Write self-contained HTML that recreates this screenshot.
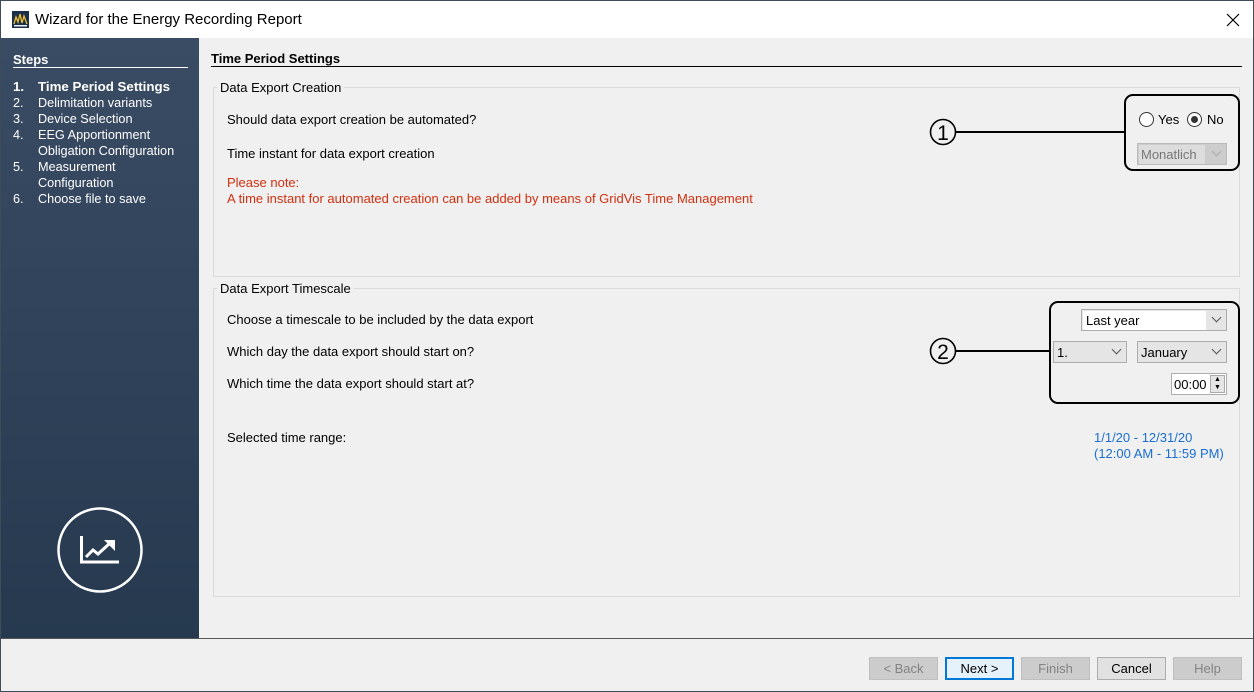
<!DOCTYPE html>
<html><head><meta charset="utf-8"><style>
*{box-sizing:border-box;margin:0;padding:0}
body{width:1254px;height:692px;position:relative;overflow:hidden;font-family:"Liberation Sans",sans-serif;font-size:13px;color:#000;background:#3e4c5a}
.a{position:absolute;white-space:nowrap}
#win{position:absolute;left:1px;top:1px;width:1252px;height:690px;background:#f0f0f0}
#title{position:absolute;left:0;top:0;width:1252px;height:37px;background:#fff}
#side{position:absolute;left:0;top:37px;width:198px;height:600px;background:linear-gradient(#3a4c64,#26394f)}
.sd{color:#fff;font-size:12.7px}
.box{position:absolute;border:1px solid #dadada}
.lg{background:#f0f0f0;padding:0 3px;font-size:13px}
.dd{position:absolute;border:1px solid #adadad;background:#e5e5e5;height:22px}
.dd span{position:absolute;left:3px;top:3px}
.dd i{position:absolute;right:6px;top:4px;width:7px;height:7px;border-right:1px solid #555;border-bottom:1px solid #555;transform:rotate(45deg)}
.btn{position:absolute;top:656px;width:69px;height:23px;border:1px solid #adadad;background:#e1e1e1;text-align:center;line-height:21px}
.dis{background:#cccccc;border-color:#bfbfbf;color:#838383}
.call{position:absolute;border:2px solid #000;border-radius:9px}
</style></head><body>
<div id="win">
<div id="title">
<svg class="a" style="left:11px;top:10px" width="17" height="17"><rect width="17" height="17" fill="#1a2f4a"/><path d="M2 13 L4 6 L6 11 L8 3 L10 12 L12 5 L15 13" stroke="#f0c030" fill="none" stroke-width="1.3"/><rect x="2" y="14" width="13" height="1.5" fill="#eee"/></svg>
<div class="a" style="left:34px;top:10px;font-size:15px">Wizard for the Energy Recording Report</div>
<svg class="a" style="left:1225px;top:12px" width="14" height="14"><path d="M1 1L13 13M13 1L1 13" stroke="#000" stroke-width="1.2"/></svg>
</div>
<div id="side">
<div class="a sd" style="left:12px;top:14px;font-weight:bold;font-size:13px">Steps</div>
<div class="a" style="left:12px;top:29px;width:175px;height:1px;background:#fff"></div>
<div class="a sd" style="left:12px;top:41px;font-weight:bold;font-size:13.3px">1.</div><div class="a sd" style="left:37px;top:41px;font-weight:bold;font-size:13.3px">Time Period Settings</div>
<div class="a sd" style="left:12px;top:58px">2.</div><div class="a sd" style="left:37px;top:58px">Delimitation variants</div>
<div class="a sd" style="left:12px;top:74px">3.</div><div class="a sd" style="left:37px;top:74px">Device Selection</div>
<div class="a sd" style="left:12px;top:90px">4.</div><div class="a sd" style="left:37px;top:90px">EEG Apportionment</div>
<div class="a sd" style="left:37px;top:106px">Obligation Configuration</div>
<div class="a sd" style="left:12px;top:122px">5.</div><div class="a sd" style="left:37px;top:122px">Measurement</div>
<div class="a sd" style="left:37px;top:138px">Configuration</div>
<div class="a sd" style="left:12px;top:154px">6.</div><div class="a sd" style="left:37px;top:154px">Choose file to save</div>
<svg class="a" style="left:56px;top:469px" width="88" height="88"><circle cx="43" cy="43" r="41.5" fill="none" stroke="#fff" stroke-width="2.5"/><path d="M24.5 29V55H62" fill="none" stroke="#fff" stroke-width="3"/><path d="M29 50L36 43L41 47L52 37" fill="none" stroke="#fff" stroke-width="3"/><path d="M47 33H58V44Z" fill="#fff"/></svg>
</div>
<div class="a" style="left:210px;top:50px;font-weight:bold;font-size:13px">Time Period Settings</div>
<div class="a" style="left:210px;top:65px;width:1031px;height:1px;background:#000"></div>

<div class="box" style="left:212px;top:86px;width:1027px;height:190px"></div>
<div class="a lg" style="left:216px;top:79px">Data Export Creation</div>
<div class="a" style="left:226px;top:111px">Should data export creation be automated?</div>
<div class="a" style="left:226px;top:145px">Time instant for data export creation</div>
<div class="a" style="left:226px;top:174px;color:#d03010">Please note:</div>
<div class="a" style="left:226px;top:190px;color:#d03010">A time instant for automated creation can be added by means of GridVis Time Management</div>
<div class="call" style="left:1123px;top:93px;width:116px;height:77px"></div>
<div class="a" style="left:954px;top:130px;width:170px;height:2px;background:#000"></div>
<svg class="a" style="left:928px;top:117px" width="30" height="30"><circle cx="14" cy="14" r="12.5" fill="#f0f0f0" stroke="#000" stroke-width="1.6"/><text x="14" y="22" font-family="Liberation Sans" font-size="21" text-anchor="middle">1</text></svg>
<div class="a" style="left:1138px;top:111px;width:15px;height:15px;border:1px solid #333;border-radius:50%;background:#fff"></div>
<div class="a" style="left:1157px;top:111px">Yes</div>
<div class="a" style="left:1186px;top:111px;width:15px;height:15px;border:1px solid #333;border-radius:50%;background:#fff"></div>
<div class="a" style="left:1190px;top:115px;width:7px;height:7px;border-radius:50%;background:#333"></div>
<div class="a" style="left:1206px;top:111px">No</div>
<div class="dd" style="left:1136px;top:142px;width:90px;background:#ccc;border-color:#bbb"><span style="color:#777;background:#ddd;left:1px;top:1px;padding:2px 2px;width:66px">Monatlich</span><i style="border-color:#aaa"></i></div>

<div class="box" style="left:212px;top:287px;width:1027px;height:309px"></div>
<div class="a lg" style="left:216px;top:280px">Data Export Timescale</div>
<div class="a" style="left:226px;top:311px">Choose a timescale to be included by the data export</div>
<div class="a" style="left:226px;top:343px">Which day the data export should start on?</div>
<div class="a" style="left:226px;top:375px">Which time the data export should start at?</div>
<div class="a" style="left:226px;top:429px">Selected time range:</div>
<div class="call" style="left:1048px;top:300px;width:191px;height:103px"></div>
<div class="a" style="left:954px;top:349px;width:95px;height:2px;background:#000"></div>
<svg class="a" style="left:928px;top:336px" width="30" height="30"><circle cx="14" cy="14" r="12.5" fill="#f0f0f0" stroke="#000" stroke-width="1.6"/><text x="14" y="22" font-family="Liberation Sans" font-size="21" text-anchor="middle">2</text></svg>
<div class="dd" style="left:1080px;top:308px;width:146px"><span style="background:#fff;left:1px;top:1px;padding:2px 3px;width:123px">Last year</span><i></i></div>
<div class="dd" style="left:1052px;top:340px;width:74px"><span>1.</span><i></i></div>
<div class="dd" style="left:1136px;top:340px;width:90px"><span>January</span><i></i></div>
<div class="a" style="left:1170px;top:372px;width:56px;height:22px;border:1px solid #adadad;background:#fff"><span class="a" style="left:2px;top:3px">00:00</span><div class="a" style="left:38px;top:1px;width:15px;height:18px;background:#e5e5e5;border:1px solid #aaa;font-size:7px;line-height:8px;text-align:center">▲<br>▼</div></div>
<div class="a" style="left:1093px;top:429px;color:#1a6fd0;line-height:16px">1/1/20 - 12/31/20<br>(12:00 AM - 11:59 PM)</div>

<div class="a" style="left:0;top:637px;width:1252px;height:1px;background:#555"></div>
<div class="btn dis" style="left:868px">&lt; Back</div>
<div class="btn" style="left:944px;background:#e5f1fb;border:2px solid #0078d7;line-height:19px">Next &gt;</div>
<div class="btn dis" style="left:1020px">Finish</div>
<div class="btn" style="left:1096px">Cancel</div>
<div class="btn dis" style="left:1172px">Help</div>
</div>
</body></html>
